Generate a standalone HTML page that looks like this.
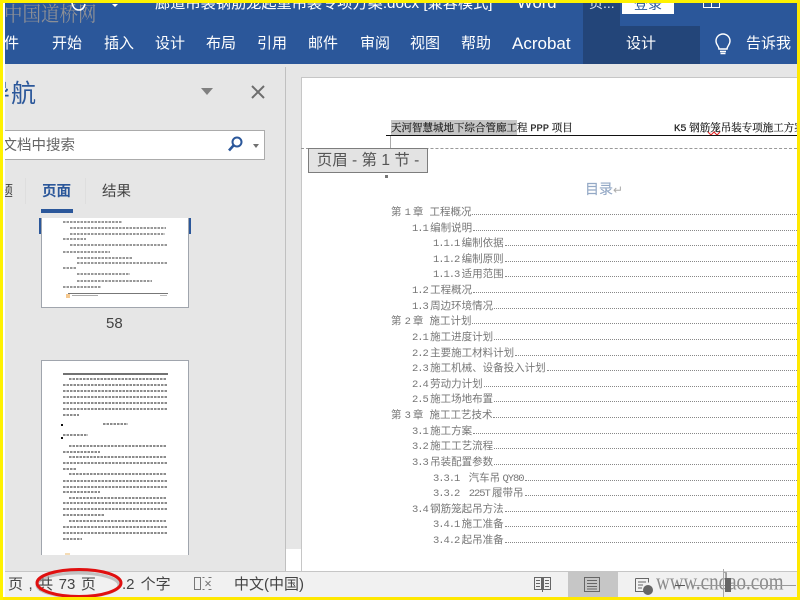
<!DOCTYPE html>
<html><head><meta charset="utf-8"><style>
html,body{margin:0;padding:0;width:800px;height:600px;overflow:hidden;background:#fff}
*{box-sizing:border-box}
body{position:relative;font-family:"Liberation Sans","Noto Sans CJK SC",sans-serif}
.a{position:absolute;white-space:nowrap}
.t{position:absolute;white-space:nowrap;color:#fff;font-size:15px;line-height:20px;top:34px}
.toc{position:absolute;right:3px;height:14px;font-size:10.5px;line-height:14px;color:#777;white-space:pre;display:flex;font-family:"Noto Sans CJK SC",sans-serif}
.toc b{font-weight:normal;font-family:"Liberation Mono",monospace;letter-spacing:-1.05px}
.toc i{flex:1;border-bottom:1px dotted #888;margin:0 0 3px 1px;height:10px}
.toc .c{word-spacing:.7px}
.m{font-family:"Liberation Mono",monospace}
</style></head><body>
<div class="a" style="left:5px;top:3px;width:792px;height:61px;background:#2b579a"></div>
<div class="a" style="left:583px;top:26px;width:117px;height:38px;background:#234579"></div>
<div class="a" style="left:583px;top:3px;width:37px;height:23px;background:#234579"></div>

<div class="a" style="left:4px;top:1px;font-size:18.5px;line-height:22px;color:#8c8f96;font-family:'Noto Serif CJK SC',serif;transform:scaleY(1.1);transform-origin:0 0">中国道桥网</div>
<svg class="a" style="left:70px;top:3px" width="18" height="9" fill="none" stroke="#fff" stroke-width="1.6"><path d="M2 0c1 5 4 7 7 7s5-2 6-6"/></svg>
<div class="a" style="left:112px;top:4px;width:0;height:0;border:3px solid transparent;border-top:3px solid #fff"></div>
<div class="a" style="left:155px;top:-6px;color:#fff;font-size:15.2px;line-height:20px;height:17px;overflow:hidden;clip-path:inset(9px 0 0 0)">廊道吊装钢筋笼起重吊装专项方案.docx [兼容模式]</div>
<div class="a" style="left:517px;top:-7px;color:#fff;font-size:16.7px;line-height:20px;clip-path:inset(10px 0 0 0)">Word</div>
<div class="a" style="left:589px;top:-7px;color:#dde3ee;font-size:14px;line-height:20px;clip-path:inset(10px 0 0 0)">页...</div>
<div class="a" style="left:622px;top:3px;width:52px;height:11px;background:#fff;overflow:hidden;color:#2b579a;font-size:14px;line-height:12px;text-align:center"><span style="position:relative;top:-5px">登录</span></div>
<div class="a" style="left:703px;top:3px;width:17px;height:5px;border:1px solid #fff;border-top:0"></div>
<div class="a" style="left:711px;top:3px;width:1px;height:5px;background:#fff"></div>

<div class="t" style="left:5px;width:14px;overflow:hidden;direction:rtl">件</div>
<div class="t" style="left:52px">开始</div>
<div class="t" style="left:104px">插入</div>
<div class="t" style="left:155px">设计</div>
<div class="t" style="left:206px">布局</div>
<div class="t" style="left:257px">引用</div>
<div class="t" style="left:308px">邮件</div>
<div class="t" style="left:360px">审阅</div>
<div class="t" style="left:410px">视图</div>
<div class="t" style="left:461px">帮助</div>
<div class="t" style="left:512px;font-size:17px">Acrobat</div>
<div class="t" style="left:626px">设计</div>
<svg class="a" style="left:712px;top:33px" width="22" height="24" viewBox="0 0 22 24" fill="none" stroke="#fff" stroke-width="1.4"><path d="M7 16c0-3-3-4-3-8a7 7 0 0 1 14 0c0 4-3 5-3 8z"/><path d="M8 18.5h6M8.5 20.5h5"/></svg>
<div class="t" style="left:746px;width:51px;overflow:hidden">告诉我</div>

<!-- nav pane -->
<div class="a" style="left:3px;top:64px;width:283px;height:508px;background:#e6e6e6"></div>
<div class="a" style="left:285px;top:67px;width:1px;height:505px;background:#c0c0c0"></div>
<div class="a" style="left:11px;top:76px;width:25px;height:36px;overflow:hidden;color:#2b579a;font-size:25px;line-height:36px">航</div>
<div class="a" style="left:5px;top:76px;width:5px;height:36px;overflow:hidden;color:#2b579a;font-size:25px;line-height:36px;direction:rtl">导</div>
<div class="a" style="left:201px;top:88px;width:0;height:0;border:6px solid transparent;border-top:7px solid #808080;border-bottom:0"></div>
<svg class="a" style="left:250px;top:84px" width="16" height="16" viewBox="0 0 16 16" stroke="#6d6d6d" stroke-width="2"><path d="M2 2l12 12M14 2L2 14"/></svg>
<div class="a" style="left:5px;top:130px;width:260px;height:30px;background:#fff;border:1px solid #ababab;border-left:0"></div>
<div class="a" style="left:5px;top:136px;width:70px;height:20px;overflow:hidden;font-size:14.5px;line-height:20px;color:#666;direction:rtl">文档中搜索</div>
<svg class="a" style="left:227px;top:135px" width="17" height="18" viewBox="0 0 17 18" fill="none" stroke="#2b579a" stroke-width="2"><circle cx="10" cy="7" r="4.5"/><path d="M6.5 10.5L2 15.5" stroke-width="2.6"/></svg>
<div class="a" style="left:253px;top:144px;width:0;height:0;border:3.5px solid transparent;border-top:4px solid #707070;border-bottom:0"></div>
<div class="a" style="left:5px;top:182px;width:8px;height:20px;overflow:hidden;font-size:14.5px;line-height:20px;color:#444;direction:rtl">题</div>
<div class="a" style="left:25px;top:178px;width:1px;height:26px;background:#dedede"></div>
<div class="a" style="left:85px;top:178px;width:1px;height:26px;background:#dedede"></div>
<div class="a" style="left:42px;top:182px;font-size:14.5px;line-height:20px;color:#2b579a;font-weight:bold">页面</div>
<div class="a" style="left:102px;top:182px;font-size:14.5px;line-height:20px;color:#444">结果</div>
<div class="a" style="left:41px;top:209px;width:32px;height:4px;background:#2b579a"></div>

<!-- thumb 1 -->
<div class="a" style="left:39px;top:218px;width:2px;height:16px;background:#2b579a"></div>
<div class="a" style="left:189px;top:218px;width:2px;height:16px;background:#2b579a"></div>
<div class="a" style="left:41px;top:218px;width:148px;height:90px;background:#fff;border:1px solid #a0a5ad;border-top:0;overflow:hidden">
<svg width="146" height="88" style="position:absolute;left:0;top:0;filter:blur(.35px)" fill="none" stroke="#777" stroke-width="1.6" stroke-dasharray="2.5 1">
<path d="M21 4H80M28 10H124M28 16H123M21 21H44M28 27H125M21 34H68M35 40H90M35 45H125M21 50H35M35 56H88M35 63H110M21 69H59"/></svg>
<div style="position:absolute;left:26px;top:75px;width:100px;height:1px;background:#777"></div>
<div style="position:absolute;left:24px;top:76px;width:4px;height:4px;background:#f5c88f"></div>
<div style="position:absolute;left:30px;top:77px;width:26px;height:1px;background:#aaa"></div>
<div style="position:absolute;left:118px;top:77px;width:7px;height:1px;background:#bbb"></div>
</div>
<div class="a" style="left:106px;top:314px;font-size:15px;line-height:20px;color:#444">58</div>
<!-- thumb 2 -->
<div class="a" style="left:41px;top:360px;width:148px;height:195px;background:#fff;border:1px solid #a0a5ad;border-bottom:0;overflow:hidden">
<svg width="146" height="194" style="position:absolute;left:0;top:0;filter:blur(.35px)" fill="none" stroke="#666" stroke-width="1.6" stroke-dasharray="2.5 1">
<path d="M21 13H126" stroke="#444" stroke-width="1.4" stroke-dasharray="none"/>
<path d="M27 18H125M21 24H125M21 30H125M21 36H125M21 42H125M21 48H125M21 54H37"/>
<path d="M61 63H86M21 74H46"/>
<path d="M27 85H125M21 91H58M27 96H125M21 102H125M21 108H35M27 113H125M21 120H125M21 126H125M21 131H58M27 137H125M21 142H125M21 148H125M21 154H62M27 160H125M21 166H125M21 172H125M21 178H40"/>
</svg>
</div>
<div class="a" style="left:61px;top:424px;width:2px;height:2px;background:#111"></div>
<div class="a" style="left:61px;top:437px;width:2px;height:2px;background:#111"></div>
<div class="a" style="left:65px;top:553px;width:5px;height:2px;background:#f5dcb5"></div>

<!-- document area -->
<div class="a" style="left:286px;top:64px;width:511px;height:485px;background:#e6e6e6"></div>
<div class="a" style="left:301px;top:77px;width:496px;height:495px;background:#fff;border-left:1px solid #c6c6c6;border-top:1px solid #c6c6c6"></div>
<div class="a" style="left:286px;top:549px;width:15px;height:23px;background:#fff"></div>
<div class="a" style="left:391px;top:120px;width:126px;height:15px;background:#c6c6c6"></div>
<div class="a" style="left:391px;top:120px;font-size:10.5px;line-height:16px;color:#222;font-family:'Noto Serif CJK SC',serif;-webkit-text-stroke:.2px #222">天河智慧城地下综合管廊工程 <span class="m">PPP</span> 项目</div>
<div class="a" style="left:674px;top:120px;width:123px;overflow:hidden;font-size:10.5px;line-height:16px;color:#222;font-family:'Noto Serif CJK SC',serif;-webkit-text-stroke:.2px #222"><span class="m">K5</span> 钢筋笼吊装专项施工方案</div>
<svg class="a" style="left:708px;top:131px" width="14" height="5" fill="none" stroke="#e02020"><path d="M0 1l3 3 3-3 3 3 3-3"/></svg>
<div class="a" style="left:386px;top:135px;width:411px;height:1px;background:#111"></div>
<div class="a" style="left:390px;top:136px;width:1px;height:13px;background:#aaa"></div>
<div class="a" style="left:301px;top:148px;width:496px;border-top:1px dashed #999"></div>
<div class="a" style="left:308px;top:148px;width:120px;height:25px;background:#e3e3e3;border:1px solid #7d7d7d;font-size:15.5px;line-height:23px;color:#555;text-align:center">页眉 - 第 1 节 -</div>
<div class="a" style="left:385px;top:175px;width:3px;height:3px;background:#777"></div>
<div class="a" style="left:585px;top:179px;font-size:14px;line-height:20px;color:#95a9c6;-webkit-text-stroke:.15px #95a9c6">目录<span style="color:#aaa;font-size:12px;-webkit-text-stroke:0">↵</span></div>

<div class="toc" style="left:391px;top:205px"><span class="c">第 <b>1</b> 章  工程概况</span><i></i></div>
<div class="toc" style="left:412px;top:221px"><span><b>1.1</b> 编制说明</span><i></i></div>
<div class="toc" style="left:433px;top:236px"><span><b>1.1.1</b> 编制依据</span><i></i></div>
<div class="toc" style="left:433px;top:252px"><span><b>1.1.2</b> 编制原则</span><i></i></div>
<div class="toc" style="left:433px;top:267px"><span><b>1.1.3</b> 适用范围</span><i></i></div>
<div class="toc" style="left:412px;top:283px"><span><b>1.2</b> 工程概况</span><i></i></div>
<div class="toc" style="left:412px;top:299px"><span><b>1.3</b> 周边环境情况</span><i></i></div>
<div class="toc" style="left:391px;top:314px"><span class="c">第 <b>2</b> 章  施工计划</span><i></i></div>
<div class="toc" style="left:412px;top:330px"><span><b>2.1</b> 施工进度计划</span><i></i></div>
<div class="toc" style="left:412px;top:346px"><span><b>2.2</b> 主要施工材料计划</span><i></i></div>
<div class="toc" style="left:412px;top:361px"><span><b>2.3</b> 施工机械、设备投入计划</span><i></i></div>
<div class="toc" style="left:412px;top:377px"><span><b>2.4</b> 劳动力计划</span><i></i></div>
<div class="toc" style="left:412px;top:392px"><span><b>2.5</b> 施工场地布置</span><i></i></div>
<div class="toc" style="left:391px;top:408px"><span class="c">第 <b>3</b> 章  施工工艺技术</span><i></i></div>
<div class="toc" style="left:412px;top:424px"><span><b>3.1</b> 施工方案</span><i></i></div>
<div class="toc" style="left:412px;top:439px"><span><b>3.2</b> 施工工艺流程</span><i></i></div>
<div class="toc" style="left:412px;top:455px"><span><b>3.3</b> 吊装配置参数</span><i></i></div>
<div class="toc" style="left:433px;top:471px"><span><b>3.3.1</b>    汽车吊 <b>QY80</b></span><i></i></div>
<div class="toc" style="left:433px;top:486px"><span><b>3.3.2</b>    <b>225T</b> 履带吊</span><i></i></div>
<div class="toc" style="left:412px;top:502px"><span><b>3.4</b> 钢筋笼起吊方法</span><i></i></div>
<div class="toc" style="left:433px;top:517px"><span><b>3.4.1</b> 施工准备</span><i></i></div>
<div class="toc" style="left:433px;top:533px"><span><b>3.4.2</b> 起吊准备</span><i></i></div>

<!-- status bar -->
<div class="a" style="left:3px;top:571px;width:794px;height:26px;background:#f1f1f1;border-top:1px solid #c6c6c6"></div>
<div class="a" style="left:568px;top:572px;width:50px;height:25px;background:#c6c6c6"></div>
<div class="a" style="left:8px;top:576px;font-size:15px;line-height:18px;color:#444;word-spacing:1px;letter-spacing:.15px">页 , 共 73 页</div>
<div class="a" style="left:122px;top:576px;font-size:15px;line-height:18px;color:#444;word-spacing:2px">.2 个字</div>
<svg class="a" style="left:193px;top:576px" width="20" height="16" fill="none" stroke="#777"><path d="M1.5 1.5h6v12h-6zM9.5 1.5h2M9.5 13.5h2M15.5 1.5h3M15.5 13.5h3M12.5 5l5 5M17.5 5l-5 5"/></svg>
<div class="a" style="left:234px;top:576px;font-size:15px;line-height:18px;color:#444">中文(中国)</div>
<svg class="a" style="left:533px;top:576px" width="19" height="17" fill="none" stroke="#666"><path d="M1.5 1.5h7v12h-7zM10.5 1.5h7v12h-7zM9.5 1v15M3 4.5h4M3 7.5h4M3 10.5h4M12 4.5h4M12 7.5h4M12 10.5h4"/></svg>
<svg class="a" style="left:583px;top:576px" width="19" height="17" fill="none" stroke="#666"><path d="M1.5 1.5h15v14h-15zM4 4.5h10M4 7.5h10M4 10.5h10M4 13h10"/></svg>
<svg class="a" style="left:634px;top:577px" width="20" height="18" fill="none" stroke="#666"><path d="M1.5 1.5h13v4M1.5 1.5v13h8M4 5h8M4 8h5M4 11h4"/><circle cx="14" cy="13" r="4.5" fill="#666"/></svg>
<div class="a" style="left:656px;top:570px;font-size:19px;line-height:26px;color:#8b8b8b;font-family:'Liberation Serif',serif;transform:scaleY(1.3);transform-origin:0 50%">www.cndao.com</div>
<div class="a" style="left:675px;top:585px;width:10px;height:1px;background:#555"></div>
<div class="a" style="left:692px;top:585px;width:104px;height:1px;background:#999"></div>
<div class="a" style="left:725px;top:578px;width:6px;height:14px;background:#666"></div>
<div class="a" style="left:723px;top:569px;width:1px;height:28px;background:#aaa"></div>

<svg class="a" style="left:30px;top:562px" width="100" height="38" fill="none"><ellipse cx="48" cy="23" rx="41" ry="12" stroke="#999" stroke-width="3" opacity=".55"/><ellipse cx="49" cy="21" rx="42" ry="13.5" stroke="#e01010" stroke-width="3"/></svg>

<!-- yellow frame -->
<div class="a" style="left:0;top:0;width:800px;height:3px;background:#fff200"></div>
<div class="a" style="left:0;top:597px;width:800px;height:3px;background:#ffe800"></div>
<div class="a" style="left:0;top:0;width:3px;height:600px;background:#fff200"></div>
<div class="a" style="left:797px;top:0;width:3px;height:600px;background:#ffe800"></div>
<div class="a" style="left:3px;top:3px;width:2px;height:594px;background:#fff"></div>
</body></html>
